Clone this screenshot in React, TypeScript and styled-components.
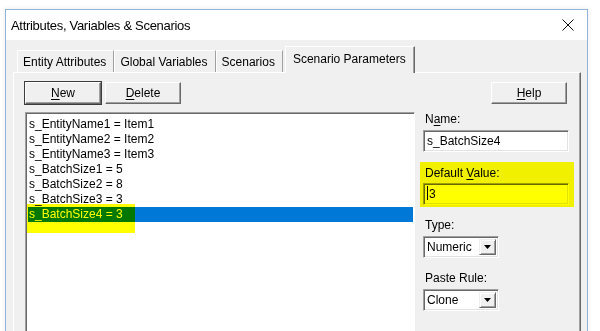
import React from "react";
import styled, { createGlobalStyle, css } from "styled-components";

const GlobalStyle = createGlobalStyle`
  html, body { margin: 0; padding: 0; background: #ffffff; overflow: hidden; }
  body { font-family: "Liberation Sans", Arial, sans-serif; color: #000; }
  * { box-sizing: border-box; }
`;

const Page = styled.div`
  width: 600px;
  height: 331px;
  padding: 9px 12px 0 5px;
  overflow: hidden;
`;

const Window = styled.div`
  width: 583px;
  height: 340px;
  border: 1px solid #8fb3dd;
  border-bottom: none;
  background: #f0f0f0;
  display: flex;
  flex-direction: column;
  box-shadow: 0 0 6px rgba(0, 0, 0, 0.08);
`;

const TitleBar = styled.div`
  height: 30px;
  flex: none;
  background: #ffffff;
  display: flex;
  align-items: center;
  justify-content: space-between;
  padding: 0 13px 0 5px;
  font-size: 13px;
  letter-spacing: -0.3px;
`;

const Body = styled.div`
  flex: 1;
  display: flex;
  flex-direction: column;
  padding: 6px 6px 0 7px;
`;

const TabStrip = styled.div`
  height: 26px;
  display: flex;
  align-items: flex-end;
  padding-left: 4px;
  position: relative;
  z-index: 1;
`;

const Tab = styled.div<{ $active?: boolean }>`
  font-size: 12px;
  white-space: nowrap;
  background: #f0f0f0;
  ${(p) =>
    p.$active
      ? css`
          height: 27px;
          margin-bottom: -1px;
          margin-left: 2px;
          padding: 5px 8px 0 7px;
          border-top: 1px solid #ffffff;
          border-left: 1px solid #ffffff;
          border-right: 1px solid #696969;
          box-shadow: inset -1px 0 0 #a0a0a0;
        `
      : css`
          height: 22px;
          padding: 4px 7px 0 5px;
          border-top: 1px solid #ffffff;
          border-left: 1px solid #ffffff;
          border-right: 1px solid #a0a0a0;
        `}
`;

const Panel = styled.div`
  flex: 1;
  border-top: 1px solid #ffffff;
  border-left: 1px solid #ffffff;
  border-right: 1px solid #696969;
  box-shadow: inset -1px 0 0 #a0a0a0;
  padding: 9px 11px 0 11px;
  display: grid;
  grid-template-columns: 390px 1fr;
  column-gap: 5px;
  align-items: start;
`;

const LeftCol = styled.div`
  display: flex;
  flex-direction: column;
`;

const RightCol = styled.div`
  display: flex;
  flex-direction: column;
  padding: 0 0 0 3px;
`;

const ButtonRow = styled.div`
  display: flex;
  gap: 4px;
`;

const Button = styled.button<{ $default?: boolean }>`
  width: 76px;
  height: 22px;
  padding: 0;
  font-family: "Liberation Sans", Arial, sans-serif;
  font-size: 12px;
  color: #000;
  background: #f0f0f0;
  border: 1px solid;
  border-color: #ffffff #696969 #696969 #ffffff;
  box-shadow: inset -1px -1px 0 #a0a0a0;
  ${(p) =>
    p.$default &&
    css`
      outline: 1px solid #3c3c3c;
      outline-offset: 0;
    `}
  & u { text-decoration: underline; text-underline-offset: 2px; }
`;

const HelpButton = styled(Button)`
  align-self: flex-end;
  margin-right: 2px;
`;

const ListBox = styled.div`
  margin-top: 8px;
  height: 240px;
  background: #ffffff;
  border: 1px solid;
  border-color: #a0a0a0 #ffffff #ffffff #a0a0a0;
  box-shadow: inset 1px 1px 0 #696969;
  padding: 4px 1px 0 2px;
`;

const ListItem = styled.div<{ $selected?: boolean }>`
  height: 15px;
  line-height: 15px;
  font-size: 12px;
  padding-left: 1px;
  position: relative;
  white-space: nowrap;
  ${(p) =>
    p.$selected &&
    css`
      background: #0078d7;
      color: #ffffff;
    `}
`;

const Marker = styled.span`
  position: absolute;
  background: #ffff00;
  mix-blend-mode: multiply;
  pointer-events: none;
`;

const ListMarker = styled(Marker)`
  left: -1px;
  top: -3px;
  width: 108px;
  height: 29px;
`;

const Label = styled.div<{ $mt: number }>`
  margin-top: ${(p) => p.$mt}px;
  height: 15px;
  line-height: 15px;
  font-size: 12px;
  padding-left: 2px;
  & u { text-decoration: underline; text-underline-offset: 2px; }
`;

const sunken = css`
  background: #ffffff;
  border: 1px solid;
  border-color: #a0a0a0 #ffffff #ffffff #a0a0a0;
  box-shadow: inset 1px 1px 0 #696969, inset -1px -1px 0 #e3e3e3;
`;

const TextBox = styled.div<{ $mt: number }>`
  ${sunken};
  margin-top: ${(p) => p.$mt}px;
  height: 22px;
  width: 146px;
  font-size: 12px;
  line-height: 18px;
  padding: 1px 3px;
  white-space: nowrap;
`;

const Caret = styled.span`
  display: inline-block;
  width: 1px;
  height: 14px;
  background: #000;
  vertical-align: -2px;
  margin-right: 1px;
`;

const Highlight = styled.div`
  position: relative;
  display: flex;
  flex-direction: column;
  margin-top: 14px;
`;

const FieldMarker = styled(Marker)`
  left: -3px;
  right: -5px;
  top: -4px;
  bottom: -2px;
`;

const Combo = styled.div<{ $mt: number }>`
  ${sunken};
  margin-top: ${(p) => p.$mt}px;
  width: 76px;
  height: 22px;
  display: flex;
  align-items: stretch;
  padding: 2px;
  font-size: 12px;
`;

const ComboText = styled.div`
  flex: 1;
  line-height: 17px;
  padding-left: 1px;
`;

const DropButton = styled.div`
  width: 17px;
  background: #f0f0f0;
  border: 1px solid;
  border-color: #f0f0f0 #696969 #696969 #f0f0f0;
  box-shadow: inset 1px 1px 0 #ffffff, inset -1px -1px 0 #a0a0a0;
  display: flex;
  align-items: center;
  justify-content: center;
`;

const Arrow = () => (
  <svg width="7" height="4" viewBox="0 0 7 4">
    <path d="M0 0 H7 L3.5 4 Z" fill="#000" />
  </svg>
);

const CloseIcon = () => (
  <svg width="12" height="12" viewBox="0 0 12 12">
    <path d="M0.5 0.5 L11.5 11.5 M11.5 0.5 L0.5 11.5" stroke="#111" strokeWidth="1" fill="none" />
  </svg>
);

const items = [
  "s_EntityName1 = Item1",
  "s_EntityName2 = Item2",
  "s_EntityName3 = Item3",
  "s_BatchSize1 = 5",
  "s_BatchSize2 = 8",
  "s_BatchSize3 = 3",
  "s_BatchSize4 = 3",
];

export default function App() {
  return (
    <>
      <GlobalStyle />
      <Page>
        <Window>
          <TitleBar>
            <span>Attributes, Variables &amp; Scenarios</span>
            <CloseIcon />
          </TitleBar>
          <Body>
            <TabStrip>
              <Tab>Entity Attributes</Tab>
              <Tab>Global Variables</Tab>
              <Tab>Scenarios</Tab>
              <Tab $active>Scenario Parameters</Tab>
            </TabStrip>
            <Panel>
              <LeftCol>
                <ButtonRow>
                  <Button $default>
                    <u>N</u>ew
                  </Button>
                  <Button>
                    <u>D</u>elete
                  </Button>
                </ButtonRow>
                <ListBox>
                  {items.map((it, i) => {
                    const sel = i === items.length - 1;
                    return (
                      <ListItem key={it} $selected={sel}>
                        {it}
                        {sel && <ListMarker />}
                      </ListItem>
                    );
                  })}
                </ListBox>
              </LeftCol>
              <RightCol>
                <HelpButton>
                  <u>H</u>elp
                </HelpButton>
                <Label $mt={8}>
                  N<u>a</u>me:
                </Label>
                <TextBox $mt={3}>s_BatchSize4</TextBox>
                <Highlight>
                  <Label $mt={0}>
                    Default <u>V</u>alue:
                  </Label>
                  <TextBox $mt={2}>
                    <Caret />3
                  </TextBox>
                  <FieldMarker />
                </Highlight>
                <Label $mt={13}>Type:</Label>
                <Combo $mt={3}>
                  <ComboText>Numeric</ComboText>
                  <DropButton>
                    <Arrow />
                  </DropButton>
                </Combo>
                <Label $mt={13}>Paste Rule:</Label>
                <Combo $mt={3}>
                  <ComboText>Clone</ComboText>
                  <DropButton>
                    <Arrow />
                  </DropButton>
                </Combo>
              </RightCol>
            </Panel>
          </Body>
        </Window>
      </Page>
    </>
  );
}
